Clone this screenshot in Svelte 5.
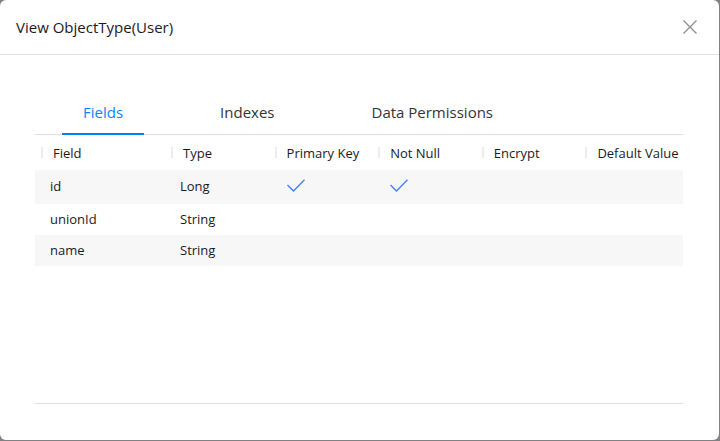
<script>
  const tabs = ['Fields', 'Indexes', 'Data Permissions'];
  const columns = ['Field', 'Type', 'Primary Key', 'Not Null', 'Encrypt', 'Default Value'];
  const rows = [
    { field: 'id', type: 'Long', flags: [true, true, false], value: '' },
    { field: 'unionId', type: 'String', flags: [false, false, false], value: '' },
    { field: 'name', type: 'String', flags: [false, false, false], value: '' }
  ];
  let active = $state(0);
</script>

<div class="backdrop">
  <section class="dialog" role="dialog" aria-labelledby="dialog-title">
    <header>
      <h1 id="dialog-title">View ObjectType(User)</h1>
      <button class="close" aria-label="Close">
        <svg width="14" height="14" viewBox="0 0 14 14" aria-hidden="true">
          <path d="M0.5 0.5 13.5 13.5M13.5 0.5 0.5 13.5" />
        </svg>
      </button>
    </header>
    <div class="content">
      <div class="tabs" role="tablist">
        {#each tabs as tab, i}
          <button role="tab" class="tab" class:active={active === i} aria-selected={active === i} onclick={() => (active = i)}>{tab}</button>
        {/each}
      </div>
      <div class="panel" role="tabpanel">
        {#if active === 0}
          <table>
            <thead>
              <tr>
                {#each columns as column}
                  <th scope="col"><span>{column}</span></th>
                {/each}
              </tr>
            </thead>
            <tbody>
              {#each rows as row}
                <tr class:flagged={row.flags.includes(true)}>
                  <td>{row.field}</td>
                  <td>{row.type}</td>
                  {#each row.flags as flag}
                    <td>
                      {#if flag}
                        <svg class="check" width="18" height="13" viewBox="0 0 18 13" role="img" aria-label="Yes">
                          <path d="M0.5 6 6.5 12 17.5 0.8" />
                        </svg>
                      {/if}
                    </td>
                  {/each}
                  <td>{row.value}</td>
                </tr>
              {/each}
            </tbody>
          </table>
        {/if}
      </div>
    </div>
  </section>
</div>

<style>
  .backdrop {
    box-sizing: border-box;
    min-height: 100vh;
    display: flex;
    padding: 0 1px 1px 0;
    background: #808085;
    font-family: "Open Sans", "Noto Sans", sans-serif;
    color: #1a1a1f;
  }
  .dialog {
    flex: 1;
    min-width: 0;
    display: flex;
    flex-direction: column;
    background: #fff;
    border-radius: 6px;
  }
  header {
    height: 54px;
    display: flex;
    align-items: center;
    justify-content: space-between;
    padding: 0 16px;
    border-bottom: 1px solid #e1e1e3;
  }
  h1 {
    margin: 0;
    font-size: 15px;
    font-weight: 400;
    line-height: 24px;
  }
  button {
    border: 0;
    background: none;
    font: inherit;
    cursor: pointer;
  }
  .close {
    display: flex;
    padding: 6px;
  }
  .close path {
    fill: none;
    stroke: #8d8d94;
    stroke-width: 1.3;
  }
  .content {
    flex: 1;
    display: flex;
    flex-direction: column;
    padding: 36px 36px 36px 35px;
  }
  .tabs {
    display: flex;
    gap: 55px;
    padding: 0 27px;
    border-bottom: 1px solid #dfdfe1;
  }
  .tab {
    height: 44px;
    margin-bottom: -1px;
    padding: 0 21px;
    border-bottom: 2px solid transparent;
    color: #333338;
    font-size: 15px;
    line-height: 42px;
  }
  .tab.active {
    color: #1181fb;
    border-color: #0080ff;
  }
  .panel {
    flex: 1;
    border-bottom: 1px solid #dfdfe1;
  }
  table {
    width: 100%;
    table-layout: fixed;
    border-collapse: collapse;
    font-size: 13px;
    line-height: 18px;
  }
  th {
    height: 35px;
    padding: 0 0 0 6px;
    font-weight: 400;
    text-align: left;
    white-space: nowrap;
  }
  th:first-child {
    width: 124px;
  }
  th span {
    display: flex;
    align-items: center;
    gap: 10px;
  }
  th span::before {
    content: "";
    width: 2px;
    height: 11px;
    background: #ededee;
  }
  td {
    height: 29px;
    padding: 0 0 2px 15px;
  }
  .flagged td {
    height: 32px;
  }
  tbody tr:nth-child(odd) {
    background: #f7f7f7;
  }
  .check {
    display: block;
    margin: 0 0 2px 3px;
  }
  .check path {
    fill: none;
    stroke: #3f7ff8;
    stroke-width: 1.3;
  }
</style>
